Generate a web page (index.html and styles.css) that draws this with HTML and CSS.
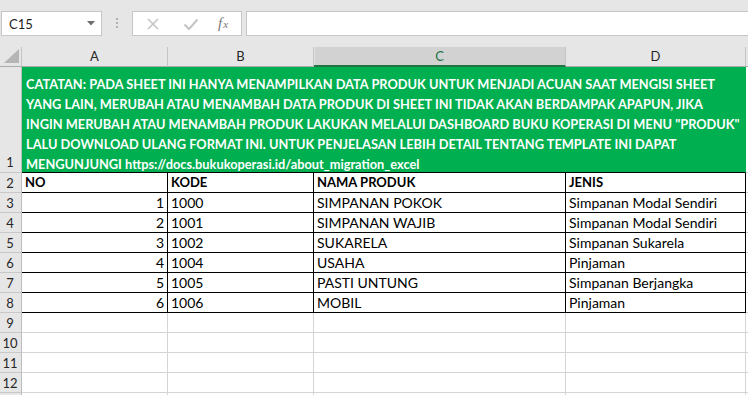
FILE: index.html
```html
<!DOCTYPE html>
<html lang="en">
<head>
    <meta charset="UTF-8">
    <title>Produk</title>
    <link rel="stylesheet" href="styles.css">
</head>
<body>

    <div class="toolbar">
        <div class="namebox">
            <span>C15</span>
            <svg class="caret" width="8" height="5" viewBox="0 0 8 5"><path d="M0 0h8L4 4.5z" fill="#6d6d6d"/></svg>
        </div>
        <div class="grip"><i></i><i></i><i></i></div>
        <div class="fbtns">
            <svg width="14" height="14" viewBox="0 0 14 14"><path d="M2 2l10 10M12 2L2 12" stroke="#c4c4c4" stroke-width="1.6"/></svg>
            <svg width="16" height="14" viewBox="0 0 16 14"><path d="M1.5 7.5l4.5 4.5L14.5 2.5" fill="none" stroke="#c4c4c4" stroke-width="2"/></svg>
            <span class="fx">f<sub>x</sub></span>
        </div>
        <div class="finput"></div>
    </div>

    <div class="sheet">
        <!-- column headers -->
        <div class="corner"><svg width="15" height="14" viewBox="0 0 15 14"><path d="M15 0v14H0z" fill="#b5b5b5"/></svg></div>
        <div class="colhead">A</div>
        <div class="colhead">B</div>
        <div class="colhead active">C</div>
        <div class="colhead">D</div>
        <div class="colhead edge"></div>

        <!-- row 1 -->
        <div class="rowhead tall">1</div>
        <div class="note">CATATAN: PADA SHEET INI HANYA MENAMPILKAN DATA PRODUK UNTUK MENJADI ACUAN SAAT MENGISI SHEET<br>YANG LAIN, MERUBAH ATAU MENAMBAH DATA PRODUK DI SHEET INI TIDAK AKAN BERDAMPAK APAPUN, JIKA<br>INGIN MERUBAH ATAU MENAMBAH PRODUK LAKUKAN MELALUI DASHBOARD BUKU KOPERASI DI MENU "PRODUK"<br>LALU DOWNLOAD ULANG FORMAT INI. UNTUK PENJELASAN LEBIH DETAIL TENTANG TEMPLATE INI DAPAT<br>MENGUNJUNGI https://docs.bukukoperasi.id/about_migration_excel</div>
        <div class="cell edge"></div>

        <!-- row 2 -->
        <div class="rowhead">2</div>
        <div class="cell data bold">NO</div>
        <div class="cell data bold">KODE</div>
        <div class="cell data bold">NAMA PRODUK</div>
        <div class="cell data bold">JENIS</div>
        <div class="cell edge"></div>

        <div class="rowhead">3</div>
        <div class="cell data num">1</div>
        <div class="cell data">1000</div>
        <div class="cell data">SIMPANAN POKOK</div>
        <div class="cell data">Simpanan Modal Sendiri</div>
        <div class="cell edge"></div>

        <div class="rowhead">4</div>
        <div class="cell data num">2</div>
        <div class="cell data">1001</div>
        <div class="cell data">SIMPANAN WAJIB</div>
        <div class="cell data">Simpanan Modal Sendiri</div>
        <div class="cell edge"></div>

        <div class="rowhead">5</div>
        <div class="cell data num">3</div>
        <div class="cell data">1002</div>
        <div class="cell data">SUKARELA</div>
        <div class="cell data">Simpanan Sukarela</div>
        <div class="cell edge"></div>

        <div class="rowhead">6</div>
        <div class="cell data num">4</div>
        <div class="cell data">1004</div>
        <div class="cell data">USAHA</div>
        <div class="cell data">Pinjaman</div>
        <div class="cell edge"></div>

        <div class="rowhead">7</div>
        <div class="cell data num">5</div>
        <div class="cell data">1005</div>
        <div class="cell data">PASTI UNTUNG</div>
        <div class="cell data">Simpanan Berjangka</div>
        <div class="cell edge"></div>

        <div class="rowhead">8</div>
        <div class="cell data num">6</div>
        <div class="cell data">1006</div>
        <div class="cell data">MOBIL</div>
        <div class="cell data">Pinjaman</div>
        <div class="cell edge"></div>

        <div class="rowhead">9</div>
        <div class="cell"></div><div class="cell"></div><div class="cell"></div><div class="cell"></div><div class="cell edge"></div>
        <div class="rowhead">10</div>
        <div class="cell"></div><div class="cell"></div><div class="cell"></div><div class="cell"></div><div class="cell edge"></div>
        <div class="rowhead">11</div>
        <div class="cell"></div><div class="cell"></div><div class="cell"></div><div class="cell"></div><div class="cell edge"></div>
        <div class="rowhead">12</div>
        <div class="cell"></div><div class="cell"></div><div class="cell"></div><div class="cell"></div><div class="cell edge"></div>
        <div class="rowhead"></div>
        <div class="cell"></div><div class="cell"></div><div class="cell"></div><div class="cell"></div><div class="cell edge"></div>
    </div>

</body>
</html>
```

FILE: styles.css
```css
body {
    margin: 0;
    width: 748px;
    height: 395px;
    overflow: hidden;
    background-color: #fff;
    font-family: Lato, "Open Sans", sans-serif;
    font-size: 13px;
    color: #000;
}

/* formula bar */
.toolbar {
    height: 47px;
    box-sizing: border-box;
    padding-top: 11px;
    background-color: #e6e6e6;
    display: flex;
    align-items: flex-start;
}

.namebox {
    margin-left: 1px;
    width: 101px;
    height: 25px;
    box-sizing: border-box;
    border: 1px solid #c6c6c6;
    background-color: #fff;
    display: flex;
    align-items: center;
    justify-content: space-between;
    padding: 0 6px 0 7px;
    font-size: 13px;
    color: #222;
}

.grip {
    width: 3px;
    margin: 7px 13px 0 14px;
    display: flex;
    flex-direction: column;
    gap: 2px;
}

.grip i {
    width: 2px;
    height: 2px;
    background-color: #b0b0b0;
}

.fbtns {
    width: 110px;
    height: 25px;
    box-sizing: border-box;
    border: 1px solid #c6c6c6;
    background-color: #fff;
    display: flex;
    align-items: center;
    gap: 23px;
    padding-left: 13px;
}

.fx {
    font-family: "Liberation Serif", serif;
    font-style: italic;
    font-size: 15px;
    color: #777;
    margin-left: -4px;
}

.fx sub {
    font-size: 11px;
    vertical-align: 0;
    margin-left: 1px;
}

.finput {
    flex: 1;
    margin-left: 4px;
    height: 25px;
    box-sizing: border-box;
    border: 1px solid #c6c6c6;
    border-right: none;
    background-color: #fff;
}

/* grid of cells */
.sheet {
    display: grid;
    grid-template-columns: 22px 146px 146px 252px 180px 2px;
    grid-template-rows: 20px 106px;
    grid-auto-rows: 20px;
}

.sheet > div {
    box-sizing: border-box;
    border-right: 1px solid #d4d4d4;
    border-bottom: 1px solid #d4d4d4;
    white-space: nowrap;
    overflow: hidden;
}

.corner {
    background-color: #e6e6e6;
    display: flex;
    align-items: flex-end;
    justify-content: flex-end;
    padding: 0 2px 3px 0;
}

.sheet > .corner,
.sheet > .colhead {
    border-right-color: #c4c4c4;
    border-bottom-color: #ababab;
}

.colhead {
    background-color: #e6e6e6;
    text-align: center;
    line-height: 19px;
    color: #262626;
}

.sheet > .colhead.active {
    background-color: #d2d2d2;
    border-bottom: 2px solid #217346;
    box-shadow: inset 1px 0 0 #e1e1e1;
    color: #217346;
}

.sheet > .rowhead {
    background-color: #e6e6e6;
    border-right-color: #bdbdbd;
    border-bottom-color: #c8c8c8;
    text-align: center;
    line-height: 20px;
    color: #262626;
    padding-right: 1px;
}

.rowhead.tall {
    display: flex;
    align-items: flex-end;
    justify-content: center;
    line-height: 19px;
}

.sheet > .note {
    grid-column: span 4;
    background-color: #00b050;
    color: #fff;
    font-weight: bold;
    font-size: 12.8px;
    line-height: 20px;
    padding: 7px 0 0 4px;
    border-right-color: #00b050;
    border-bottom: 1px solid #000;
    overflow: visible;
}

.cell {
    font-size: 14px;
    line-height: 19px;
    padding: 0 3px;
}

.sheet > .data {
    border-right-color: #000;
    border-bottom-color: #000;
}

.num {
    text-align: right;
}

.cell.bold {
    font-weight: bold;
    font-size: 13px;
}

.sheet > .edge {
    border-right: none;
}

.colhead.edge {
    background-color: #e6e6e6;
}
```
